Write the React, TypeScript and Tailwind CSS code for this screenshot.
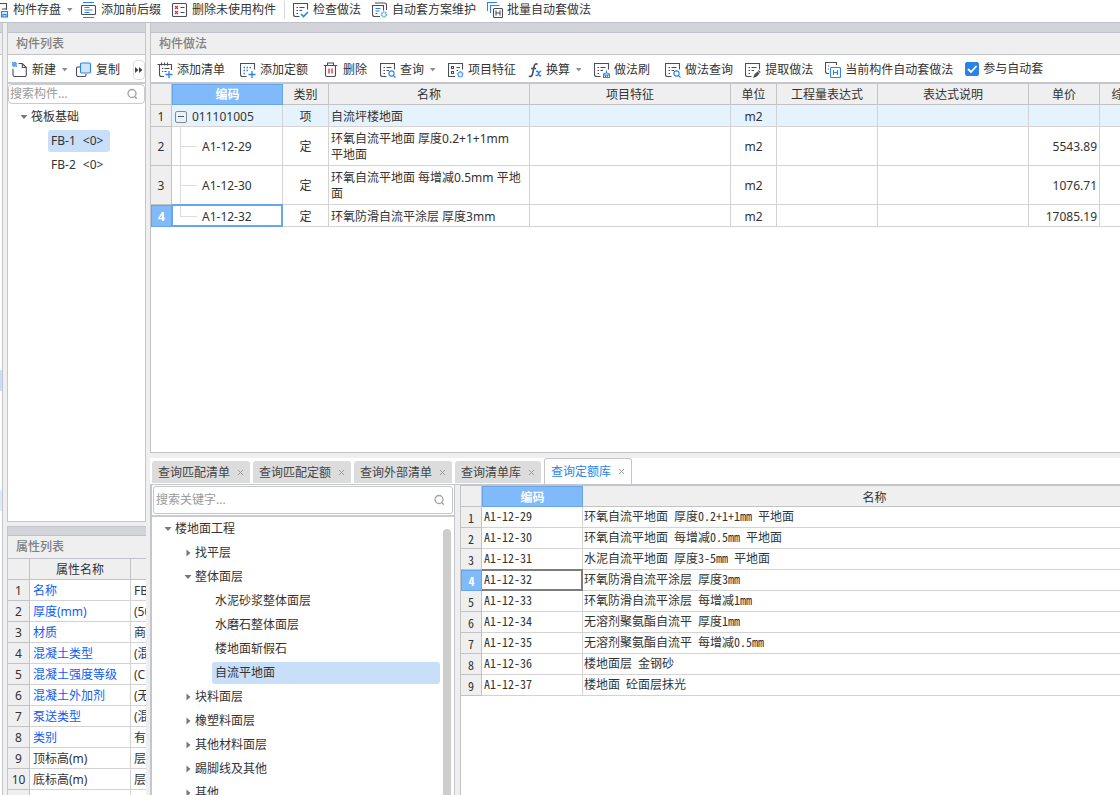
import type { ReactNode } from "react";

const DARK = "#4a4d5a";
const BLUE = "#2b83ea";

function Icon({ children, className = "w-4" }: { children: ReactNode; className?: string }) {
  return (
    <svg
      viewBox="0 0 16 16"
      preserveAspectRatio="xMaxYMid slice"
      className={`h-4 shrink-0 ${className}`}
      fill="none"
      stroke={DARK}
      strokeWidth="1.1"
      aria-hidden="true"
    >
      {children}
    </svg>
  );
}

const sheet = <path d="M6.500 14.500H2.500a2 2 0 0 1-2-2V1.500h14v6" />;
const sheetLines = <path d="M3.500 5.500h1.500M6.500 5.500h5M3.500 8.500h1.500M6.500 8.500h2.500M3.500 11.500h1.500" />;
const lens = (
  <g stroke={BLUE}>
    <circle cx="11.500" cy="11.500" r="2.600" />
    <path d="M13.300 13.300l2.200 2.200" />
  </g>
);

const icons = {
  save: (
    <Icon className="w-[9px]">
      <path d="M7 1.500h6.500v5.500H9M13.500 7v1" />
      <path d="M8.500 9.500h6v5.500h-6z" stroke={BLUE} fill="#d5e8fc" />
      <path d="M10 15v-2.500h3V15" stroke={BLUE} />
    </Icon>
  ),
  prefix: (
    <Icon>
      <rect x="0.500" y="3.500" width="14" height="9" rx="1" />
      <path d="M2 .5h11M3.500 5.500h5M3.500 8h8M3.500 10.500h5M2 15.500h11" stroke={BLUE} />
    </Icon>
  ),
  remove: (
    <Icon>
      <rect x="0.500" y="1.500" width="14" height="13" rx="1" />
      <path d="M3 4l3 3M6 4L3 7M3 9l3 3M6 9l-3 3" stroke="#e02b2b" />
      <path d="M8.500 5.500h4M8.500 10.500h4" />
    </Icon>
  ),
  check: (
    <Icon>
      {sheet}
      {sheetLines}
      <path d="M8 12l2.500 2.500 4.500-4.500" stroke={BLUE} strokeWidth="1.600" />
    </Icon>
  ),
  scheme: (
    <Icon>
      <path d="M8 14.500H2.500a2 2 0 0 1-2-2V3.500h11v5" />
      <path d="M3 1h9.500a2 2 0 0 1 2 2v5" />
      <path d="M3.500 6.500h5M3.500 9h4M3.500 11.500h2" stroke={BLUE} />
      <circle cx="12" cy="12.500" r="2.300" stroke="#6aa9f2" strokeWidth="2" strokeDasharray="1.200 .6" />
    </Icon>
  ),
  batch: (
    <Icon>
      <path d="M.5 9V.5h9.500M3.500 11V3.500h9" stroke={BLUE} />
      <rect x="6.500" y="6.500" width="9" height="9" rx="1" />
      <path d="M9 8.500v5M13 8.500v5M9 11h4" />
    </Icon>
  ),
  addList: (
    <Icon>
      <path d="M7 14.500H4.500M.5 2.500H14.500V8M2.500 2.500v10a2 2 0 0 0 2 2M4.500.5v3M7.500.5v3M10.500.5v3M5 6.500h1.200M7.500 6.500h5M5 9.500h1.200M7.500 9.500h2" />
      <path d="M12 9v7M8.500 12.500h7" stroke={BLUE} strokeWidth="1.300" />
    </Icon>
  ),
  addQuota: (
    <Icon>
      {sheet}
      <path d="M3.500 5.500h1.500M6.500 5.500h1.500M9.500 5.500h1.500M3.500 8.500h1.500M6.500 8.500h1.500M3.500 11.500h1.500" stroke={BLUE} strokeWidth="1.300" />
      <path d="M12 9v7M8.500 12.500h7" stroke={BLUE} strokeWidth="1.300" />
    </Icon>
  ),
  trash: (
    <Icon>
      <path d="M.8 3.500h13.400M4.500 3.500V1h6v2.500M2.500 3.500v9.500a1.500 1.500 0 0 0 1.500 1.500h7a1.500 1.500 0 0 0 1.500-1.500V3.500" />
      <path d="M6 6.500v5M9 6.500v5" stroke="#e02b2b" strokeWidth="1.300" />
    </Icon>
  ),
  query: (
    <Icon>
      {sheet}
      {sheetLines}
      {lens}
    </Icon>
  ),
  feature: (
    <Icon>
      <path d="M7 14.500H.5v-13h14v6M8.500 5.500h3.500M8.500 8.500h1.500" />
      <path d="M3.500 4.500h2v2h-2zM3.500 9.500h2v2h-2z" />
      <path d="M12.300 9.500l2.600 2-1 3.200h-3.200l-1-3.200z" stroke="#4a97ee" fill="#e2f0fe" />
    </Icon>
  ),
  brush: (
    <Icon>
      {sheet}
      {sheetLines}
      <path d="M9.500 15.500v-3c0-1 .8-1.500 3-1.500s3 .5 3 1.500v3zM12.500 8.500V11M9.500 13h6M11.500 13v2M13.500 13v2" stroke={BLUE} />
    </Icon>
  ),
  extract: (
    <Icon>
      {sheet}
      {sheetLines}
      <path d="M9 15l1-2.500 2.500-2.300 1.300 1.300-2.300 2.500zM13.300 8.500l2 2" fill={DARK} />
    </Icon>
  ),
  current: (
    <Icon>
      <path d="M4 11.500H2.500a2 2 0 0 1-2-2V.5h11v2.500M3 4h1M3 7h1" />
      <rect x="5.500" y="5.500" width="10" height="10" rx="1" stroke={BLUE} />
      <path d="M8.500 8v5M12.500 8v5M8.500 10.500h4" stroke={BLUE} />
    </Icon>
  ),
  create: (
    <Icon>
      <path d="M6.500 1.500h3.800l4 4v7.500a1.500 1.500 0 0 1-1.500 1.500H2.500a1.500 1.500 0 0 1-1.500-1.500V7M10.300 1.500v4h4" />
      <path
        d="M0 0h1.200v1.200H0zM2.400 0h1.200v1.200H2.400zM1.200 1.200h1.200v1.200H1.200zM3.600 1.200h1.200v1.200H3.600zM0 2.400h1.200v1.200H0zM2.400 2.400h1.200v1.200H2.400zM1.200 3.600h1.200v1.200H1.200zM3.600 3.600h1.200v1.200H3.600z"
        fill={BLUE}
        stroke={BLUE}
        strokeWidth=".3"
      />
    </Icon>
  ),
  copy: (
    <Icon>
      <path d="M4.500 5H2A1.500 1.500 0 0 0 .5 6.500v6.500a1.500 1.500 0 0 0 1.500 1.500h6.500A1.500 1.500 0 0 0 10 13v-1" />
      <rect x="4.500" y="1" width="10" height="10" rx="1.200" stroke={BLUE} fill="#cfe3fb" />
    </Icon>
  ),
};

function FxIcon() {
  return (
    <svg viewBox="0 0 14 16" className="h-4 w-3.5 shrink-0" aria-hidden="true" fill="none">
      <path d="M9.500 2.300C7.500 1 6.500 2.500 6 5L4.500 12c-.5 2.300-1.800 3-3.500 2M3 6.500h5" stroke={DARK} strokeWidth="1.600" />
      <path d="M8 9.500c2-.8 2 0 2.500 2s1 3 2.800 1.800M13.300 9.300c-1.500-.5-2.300 1.500-3 2.700s-1.500 2-2.800 1.200" stroke={BLUE} strokeWidth="1.400" />
    </svg>
  );
}

function SearchIcon() {
  return (
    <svg viewBox="0 0 12 12" className="h-3 w-3 shrink-0" fill="none" stroke="#a3a3a3" strokeWidth="1.300" aria-hidden="true">
      <circle cx="6" cy="5.500" r="4" />
      <path d="M8.800 8.500l2 2.200" />
    </svg>
  );
}

function Caret({ open = true }: { open?: boolean }) {
  return (
    <svg viewBox="0 0 8 8" className="h-2 w-2 shrink-0" fill="#777" aria-hidden="true">
      <path d={open ? "M.5 2h7L4 6z" : "M2.500.5v7L6.500 4z"} />
    </svg>
  );
}

function Tool({ icon, label, menu = false }: { icon: ReactNode; label: string; menu?: boolean }) {
  return (
    <button type="button" className="flex shrink-0 items-center gap-1 whitespace-nowrap">
      {icon}
      <span className="flex items-center gap-1.5">
        {label}
        {menu && (
          <svg viewBox="0 0 6 4" className="h-1 w-1.5" fill="#8c8c8c" aria-hidden="true">
            <path d="M0 0h5.500L2.700 3.500z" />
          </svg>
        )}
      </span>
    </button>
  );
}

function PanelTitle({ children }: { children: ReactNode }) {
  return (
    <>
      <div className="h-[10px] shrink-0 border-b border-[#bfc2c9] bg-[#d3d4da]" />
      <h2 className="flex h-[22px] shrink-0 items-center border-b border-[#bfc2c9] bg-[#efefef] px-2 font-medium text-[#808080]">{children}</h2>
    </>
  );
}

type Node = { label: string; level: number; open?: boolean; selected?: boolean };

const libraryNodes: Node[] = [
  { label: "楼地面工程", level: 0, open: true },
  { label: "找平层", level: 1, open: false },
  { label: "整体面层", level: 1, open: true },
  { label: "水泥砂浆整体面层", level: 2 },
  { label: "水磨石整体面层", level: 2 },
  { label: "楼地面斩假石", level: 2 },
  { label: "自流平地面", level: 2, selected: true },
  { label: "块料面层", level: 1, open: false },
  { label: "橡塑料面层", level: 1, open: false },
  { label: "其他材料面层", level: 1, open: false },
  { label: "踢脚线及其他", level: 1, open: false },
  { label: "其他", level: 1, open: false },
];

const indents = ["pl-3", "pl-8", "pl-[60px]"];

const properties = [
  ["名称", "FB-1"],
  ["厚度(mm)", "(500)"],
  ["材质", "商品混凝土"],
  ["混凝土类型", "(混凝土)"],
  ["混凝土强度等级", "(C30)"],
  ["混凝土外加剂", "(无)"],
  ["泵送类型", "(混凝土泵)"],
  ["类别", "有梁式"],
  ["顶标高(m)", "层底标高"],
  ["底标高(m)", "层底标高"],
  ["", ""],
];

const methods = [
  { code: "011101005", kind: "项", name: "自流坪楼地面", price: "" },
  { code: "A1-12-29", kind: "定", name: "环氧自流平地面 厚度0.2+1+1mm\n平地面", price: "5543.89" },
  { code: "A1-12-30", kind: "定", name: "环氧自流平地面 每增减0.5mm 平地面", price: "1076.71" },
  { code: "A1-12-32", kind: "定", name: "环氧防滑自流平涂层 厚度3mm", price: "17085.19" },
];

const quotas = [
  ["A1-12-29", "环氧自流平地面 厚度0.2+1+1mm 平地面"],
  ["A1-12-30", "环氧自流平地面 每增减0.5mm 平地面"],
  ["A1-12-31", "水泥自流平地面 厚度3-5mm 平地面"],
  ["A1-12-32", "环氧防滑自流平涂层 厚度3mm"],
  ["A1-12-33", "环氧防滑自流平涂层 每增减1mm"],
  ["A1-12-34", "无溶剂聚氨酯自流平 厚度1mm"],
  ["A1-12-35", "无溶剂聚氨酯自流平 每增减0.5mm"],
  ["A1-12-36", "楼地面层 金钢砂"],
  ["A1-12-37", "楼地面 砼面层抹光"],
];

const tabs = ["查询匹配清单", "查询匹配定额", "查询外部清单", "查询清单库", "查询定额库"];

const head = "border-b border-r border-[#c3c3c3] bg-[#efefef] px-0 pb-0 pt-0.5 text-center font-normal";
const cell = "border-b border-r border-[#d3d3d3] pb-0 pt-0.5";
const activeHead = "border border-[#68a6ea] bg-[#80bafa] px-0 pb-0 pt-px text-center font-bold text-white";

function TreeLines({ last }: { last: boolean }) {
  return (
    <>
      <span className={`absolute left-2 top-0 w-px bg-[#dcdcdc] ${last ? "h-1/2" : "h-full"}`} />
      <span className="absolute left-2 top-1/2 h-px w-[17px] bg-[#dcdcdc]" />
    </>
  );
}

function ComponentPanel() {
  return (
    <section className="flex min-h-0 flex-1 flex-col overflow-hidden border-x border-b border-[#c3c6cb] bg-white">
      <PanelTitle>构件列表</PanelTitle>
      <div className="flex h-[29px] shrink-0 items-center border-b-2 border-[#c9cbd1] pl-1 pt-0.5">
        <div className="flex flex-1 items-center gap-2">
          <Tool icon={icons.create} label="新建" menu />
          <Tool icon={icons.copy} label="复制" />
        </div>
        <button type="button" aria-label="更多" className="flex h-5 w-3 items-center justify-center rounded-sm border border-[#dcdcdc]">
          <svg viewBox="0 0 8 6" className="h-1.5 w-2 shrink-0" fill="#444" aria-hidden="true">
            <path d="M0 0l3.500 3L0 6zM4 0l3.500 3L4 6z" />
          </svg>
        </button>
      </div>
      <label className="flex h-5 shrink-0 items-center rounded-sm border border-[#c9cbd1] pl-px pr-1.5">
        <input aria-label="搜索构件" placeholder="搜索构件..." className="min-w-0 flex-1 outline-none placeholder:text-[#999]" />
        <SearchIcon />
      </label>
      <ul role="tree" className="pt-px">
        <li className="flex h-6 items-center gap-[3px] pl-3">
          <Caret />
          筏板基础
        </li>
        {["FB-1", "FB-2"].map((name, i) => (
          <li key={name} className="flex h-6 items-center pl-10">
            <span className={`flex w-[62px] gap-[7px] rounded-[3px] px-[3px] leading-[22px] ${i === 0 ? "bg-[#c8dffa]" : ""}`}>
              <span>{name}</span>
              <span>&lt;0&gt;</span>
            </span>
          </li>
        ))}
      </ul>
    </section>
  );
}

function PropertyPanel() {
  return (
    <section className="flex h-[269px] shrink-0 flex-col overflow-hidden border-l border-t border-[#c3c6cb] bg-white">
      <div className="h-[9px] shrink-0 border-b border-[#bfc2c9] bg-[#d3d4da]" />
      <h2 className="flex h-[23px] shrink-0 items-center border-b border-[#bfc2c9] bg-[#efefef] px-2 font-medium text-[#808080]">属性列表</h2>
      <table className="w-[223px] table-fixed border-separate border-spacing-0">
        <colgroup>
          <col className="w-[22px]" />
          <col className="w-[101px]" />
          <col className="w-[100px]" />
        </colgroup>
        <thead>
          <tr className="h-[21px]">
            <th className={head} />
            <th className={head}>属性名称</th>
            <th className={head} />
          </tr>
        </thead>
        <tbody>
          {properties.map(([name, value], i) => (
            <tr key={i} className="h-[21px]">
              <th className={head}>{name && i + 1}</th>
              <td className={`${cell} whitespace-nowrap pl-[3px] pr-0 ${i < 8 ? "text-[#0f5cf5]" : ""}`}>{name}</td>
              <td className={`${cell} whitespace-nowrap pl-[3px] pr-0`}>{value}</td>
            </tr>
          ))}
        </tbody>
      </table>
    </section>
  );
}

function MethodPanel() {
  return (
    <section className="flex min-h-0 flex-1 flex-col overflow-hidden border-b border-l border-[#c3c3c3] bg-white">
      <PanelTitle>构件做法</PanelTitle>
      <div className="flex h-[29px] shrink-0 items-center gap-[13px] border-b-2 border-[#c3c6cd] pl-1.5 pt-0.5">
        <div className="flex gap-[15px]">
          <Tool icon={icons.addList} label="添加清单" />
          <Tool icon={icons.addQuota} label="添加定额" />
          <Tool icon={icons.trash} label="删除" />
        </div>
        <div className="flex gap-3 pr-0.5">
          <Tool icon={icons.query} label="查询" menu />
          <Tool icon={icons.feature} label="项目特征" />
          <Tool icon={<FxIcon />} label="换算" menu />
          <Tool icon={icons.brush} label="做法刷" />
        </div>
        <div className="flex gap-3">
          <Tool icon={icons.query} label="做法查询" />
          <Tool icon={icons.extract} label="提取做法" />
          <Tool icon={icons.current} label="当前构件自动套做法" />
          <label className="flex shrink-0 items-center gap-1 whitespace-nowrap pb-0.5">
            <span className="relative flex">
              <input
                type="checkbox"
                defaultChecked
                className="peer h-3.5 w-3.5 appearance-none rounded-[2px] border border-[#2b83ea] checked:bg-[#2b83ea]"
              />
              <svg
                viewBox="0 0 14 14"
                className="pointer-events-none absolute inset-0 hidden h-3.5 w-3.5 peer-checked:block"
                fill="none"
                stroke="#fff"
                strokeWidth="1.800"
                aria-hidden="true"
              >
                <path d="M3 7l3 3 5.500-6" />
              </svg>
            </span>
            参与自动套
          </label>
        </div>
      </div>
      <table className="w-[1021px] table-fixed border-separate border-spacing-0">
        <colgroup>
          <col className="w-[21px]" />
          <col className="w-[111px]" />
          <col className="w-[46px]" />
          <col className="w-[201px]" />
          <col className="w-[201px]" />
          <col className="w-[46px]" />
          <col className="w-[101px]" />
          <col className="w-[151px]" />
          <col className="w-[71px]" />
          <col className="w-[72px]" />
        </colgroup>
        <thead>
          <tr className="h-[21px]">
            <th className={head} />
            <th className={activeHead}>编码</th>
            {["类别", "名称", "项目特征", "单位", "工程量表达式", "表达式说明", "单价", "综合单价"].map((h) => (
              <th key={h} className={head}>
                {h}
              </th>
            ))}
          </tr>
        </thead>
        <tbody>
          {methods.map((m, i) => {
            const tall = i === 1 || i === 2;
            const last = i === methods.length - 1;
            return (
              <tr key={m.code} className={`${tall ? "h-[39px]" : "h-[22px]"} ${i === 0 ? "bg-[#e5f3ff]" : ""}`}>
                <th className={last ? activeHead : head}>{i + 1}</th>
                <td className={`${cell} relative px-0`}>
                  {i === 0 ? (
                    <span className="flex items-center gap-[5px] pl-[3px]">
                      <button type="button" aria-label="折叠" className="flex h-3 w-3 items-center justify-center rounded-[2px] border border-[#888]">
                        <span className="h-px w-1.5 bg-[#555]" />
                      </button>
                      {m.code}
                    </span>
                  ) : (
                    <>
                      <TreeLines last={last} />
                      <span className="pl-[30px]">{m.code}</span>
                    </>
                  )}
                  {last && <span className="absolute -left-px -right-px -top-px bottom-[-1px] border-2 border-[#68a6ea]" />}
                </td>
                <td className={`${cell} px-0 text-center`}>{m.kind}</td>
                <td className={`${cell} whitespace-pre-line break-all px-[2px]`}>{m.name}</td>
                <td className={cell} />
                <td className={`${cell} px-0 text-center`}>m2</td>
                <td className={cell} />
                <td className={cell} />
                <td className={`${cell} pl-0 pr-[2px] text-right`}>{m.price}</td>
                <td className={cell} />
              </tr>
            );
          })}
        </tbody>
      </table>
    </section>
  );
}

function LibraryTree() {
  return (
    <div className="flex w-[305px] shrink-0 flex-col overflow-hidden border-l-2 border-r border-[#c3c6cd] bg-white">
      <div className="border-b-2 border-[#c9cbd1] p-px">
        <label className="flex h-7 items-center rounded-[3px] border border-[#c3c6cd] pl-0.5 pr-[7px]">
          <input aria-label="搜索关键字" placeholder="搜索关键字..." className="min-w-0 flex-1 outline-none placeholder:text-[#999]" />
          <SearchIcon />
        </label>
      </div>
      <div className="flex min-h-0 flex-1">
        <ul role="tree" className="min-w-0 flex-1">
          {libraryNodes.map((n) => (
            <li key={n.label} className={`flex h-6 items-center gap-[3px] ${indents[n.level]}`}>
              {n.open !== undefined && <Caret open={n.open} />}
              <span className={n.selected ? "flex-1 rounded-[3px] bg-[#c8dffa] pl-[3px] leading-[22px]" : n.level === 2 ? "pl-[3px]" : ""}>
                {n.label}
              </span>
            </li>
          ))}
        </ul>
        <div className="ml-[3px] mr-[3px] mt-3 w-2 rounded-t bg-[#cdcdcd]" />
      </div>
    </div>
  );
}

function QueryPanel() {
  return (
    <section className="flex h-[337px] shrink-0 flex-col overflow-hidden bg-white">
      <div role="tablist" className="flex h-[27px] shrink-0 items-end gap-[3px] border-b border-[#c3c6cd] pl-0.5">
        {tabs.map((t, i) => {
          const active = i === tabs.length - 1;
          return (
            <button
              key={t}
              type="button"
              role="tab"
              aria-selected={active}
              className={`flex items-center gap-[7px] rounded-t-[3px] px-1.5 ${
                active ? "h-[26px] border-x border-t border-[#c3c6cd] text-[#2b83ea]" : "mb-px h-[22px] bg-[#dcdcdc] pt-px text-[#444]"
              }`}
            >
              {t}
              <svg viewBox="0 0 7 7" className="h-[7px] w-[7px]" stroke="#999" fill="none" aria-hidden="true">
                <path d="M1 1l5 5M6 1L1 6" />
              </svg>
            </button>
          );
        })}
      </div>
      <div className="flex min-h-0 flex-1">
        <LibraryTree />
        <div className="w-[5px] shrink-0 bg-[#efefef]" />
        <div className="min-w-0 flex-1 overflow-hidden border-l border-t border-[#c3c3c3]">
          <table className="w-full table-fixed border-separate border-spacing-0 font-['Noto_Sans_Mono_CJK_SC','Noto_Sans_CJK_SC',monospace]">
            <colgroup>
              <col className="w-[21px]" />
              <col className="w-[101px]" />
              <col />
            </colgroup>
            <thead>
              <tr className="h-[21px]">
                <th className={head} />
                <th className={activeHead}>编码</th>
                <th className="border-b border-[#c3c3c3] bg-[#efefef] pb-0 pl-[46px] pr-0 pt-0.5 font-normal">名称</th>
              </tr>
            </thead>
            <tbody>
              {quotas.map(([code, name], i) => (
                <tr key={code} className="h-[21px]">
                  <th className={i === 3 ? activeHead : head}>{i + 1}</th>
                  <td className="relative border-b border-r border-[#d3d3d3] p-0 pb-0.5 pl-[2px]">
                    {code}
                    {i === 3 && <span className="absolute -right-px -top-px bottom-[-1px] left-0 border-2 border-l-0 border-[#7d7d7d]" />}
                  </td>
                  <td className="border-b border-[#d3d3d3] p-0 pb-0.5 pl-px">{name}</td>
                </tr>
              ))}
            </tbody>
          </table>
        </div>
      </div>
    </section>
  );
}

export default function App() {
  return (
    <div className="flex h-screen flex-col overflow-hidden bg-[#efefef] font-['Noto_Sans','Noto_Sans_CJK_SC',sans-serif] text-[12px] leading-4 text-[#333]">
      <header className="flex h-[23px] shrink-0 items-center gap-2 border-b border-[#bfc2c9] bg-white pb-0.5">
        <Tool icon={icons.save} label="构件存盘" menu />
        <div className="flex gap-[11px]">
          <Tool icon={icons.prefix} label="添加前后缀" />
          <Tool icon={icons.remove} label="删除未使用构件" />
        </div>
        <div className="h-[18px] w-px bg-[#d8d8d8]" />
        <div className="flex gap-[11px]">
          <Tool icon={icons.check} label="检查做法" />
          <Tool icon={icons.scheme} label="自动套方案维护" />
          <Tool icon={icons.batch} label="批量自动套做法" />
        </div>
      </header>
      <div className="flex min-h-0 flex-1">
        <aside className="flex w-[3px] shrink-0 flex-col border-r border-[#c3c6cb] bg-white">
          <div className="h-[10px] border-b border-[#bfc2c9] bg-[#d3d4da]" />
          <div className="h-[22px] border-b border-[#bfc2c9] bg-[#efefef]" />
          <div className="mt-[315px] h-[21px] bg-[#c8dffa]" />
          <div className="mt-[99px] h-[21px] bg-[#dceafc]" />
        </aside>
        <div className="ml-1 flex w-[139px] shrink-0 flex-col gap-1">
          <ComponentPanel />
          <PropertyPanel />
        </div>
        <main className="ml-1 flex min-w-0 flex-1 flex-col gap-[5px]">
          <MethodPanel />
          <QueryPanel />
        </main>
      </div>
    </div>
  );
}
